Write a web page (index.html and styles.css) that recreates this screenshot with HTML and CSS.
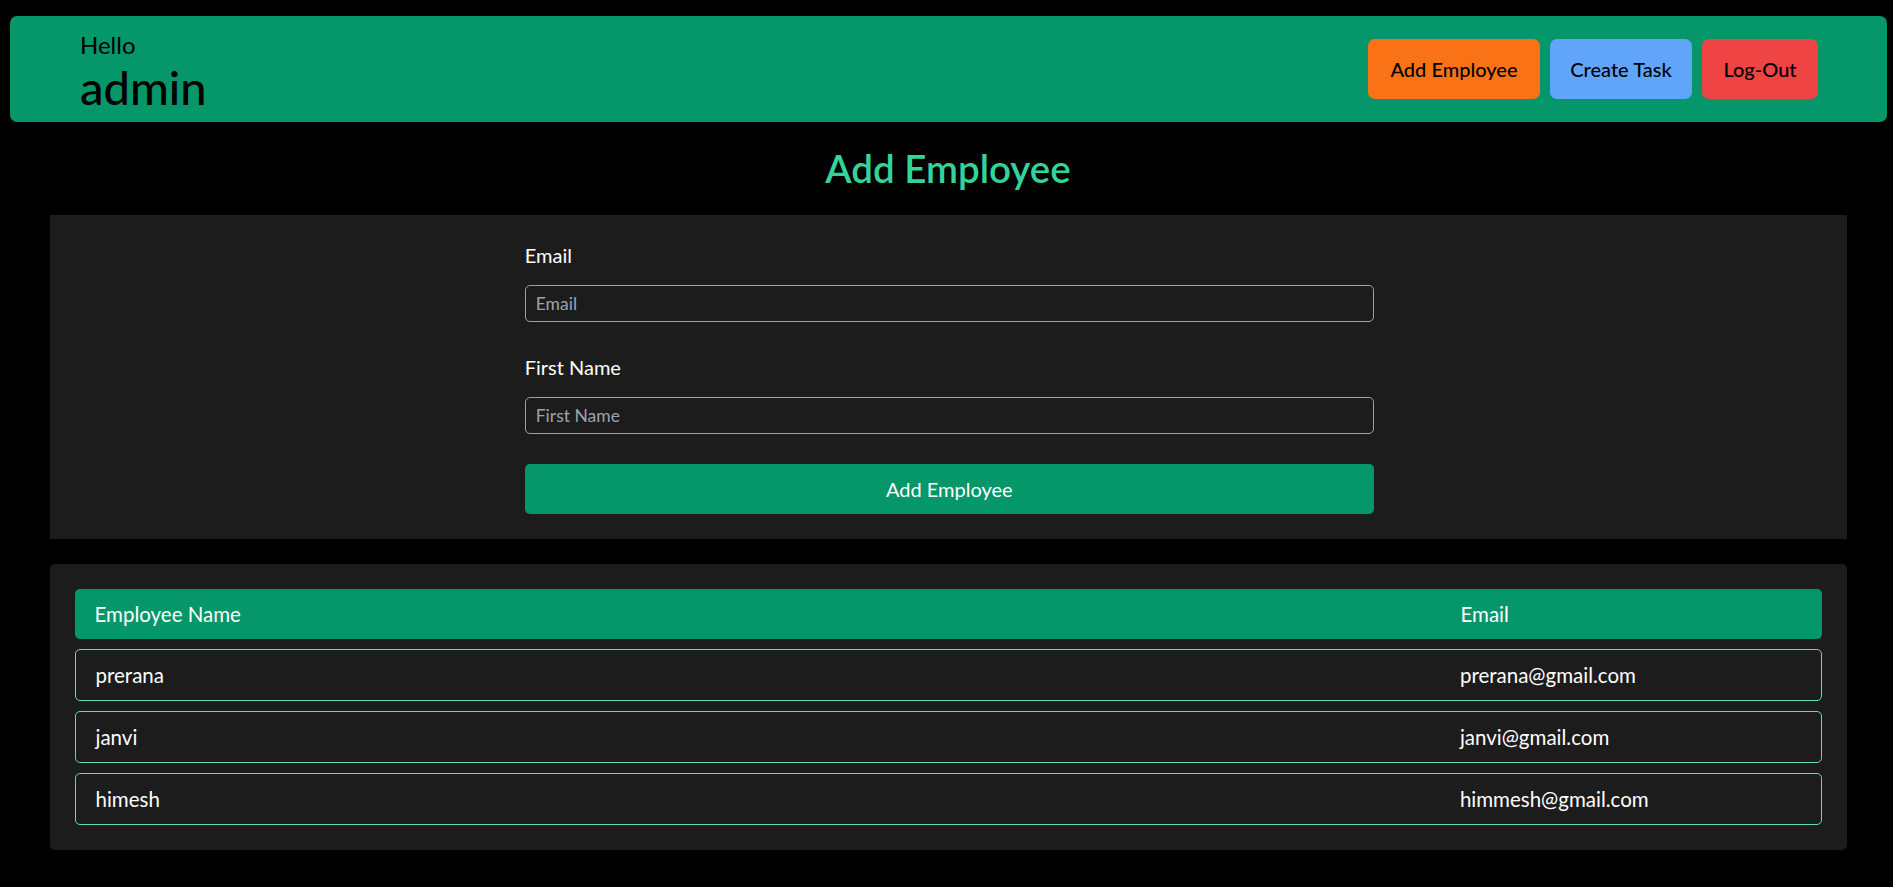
FILE: index.html
```html
<!DOCTYPE html>
<html lang="en">
<head>
<meta charset="utf-8">
<title>Admin Dashboard</title>
<link rel="stylesheet" href="styles.css">
</head>
<body>
<div class="page">
  <header class="topbar">
    <div class="greeting">
      <div class="hello">Hello</div>
      <div class="user">admin</div>
    </div>
    <nav class="actions">
      <button class="btn btn-orange">Add Employee</button>
      <button class="btn btn-blue">Create Task</button>
      <button class="btn btn-red">Log-Out</button>
    </nav>
  </header>

  <h1 class="title">Add Employee</h1>

  <section class="panel form-panel">
    <form class="emp-form">
      <label class="field-label">Email</label>
      <input class="field-input" type="email" placeholder="Email">
      <label class="field-label">First Name</label>
      <input class="field-input" type="text" placeholder="First Name">
      <button type="button" class="submit">Add Employee</button>
    </form>
  </section>

  <section class="panel table-panel">
    <div class="row head">
      <span>Employee Name</span>
      <span>Email</span>
    </div>
    <div class="row item">
      <span>prerana</span>
      <span>prerana@gmail.com</span>
    </div>
    <div class="row item">
      <span>janvi</span>
      <span>janvi@gmail.com</span>
    </div>
    <div class="row item">
      <span>himesh</span>
      <span>himmesh@gmail.com</span>
    </div>
  </section>
</div>
</body>
</html>
```
FILE: styles.css
```css
* { box-sizing: border-box; }
html, body {
  margin: 0;
  padding: 0;
  background: #000;
  font-family: Lato, "Noto Sans", sans-serif;
  color: #fff;
}
.page {
  padding: 16px 0 0 0;
}
.topbar {
  margin: 0 6px 0 10px;
  height: 106px;
  background: #059669;
  border-radius: 7px;
  padding: 10.5px 69px 10.5px 70px;
  display: flex;
  justify-content: space-between;
  align-items: center;
  color: #000;
}
.greeting { display: flex; flex-direction: column; }
.hello { font-size: 24px; line-height: 35px; }
.user { font-size: 47px; line-height: 50px; font-weight: 500; }
.actions { display: flex; gap: 10px; }
.btn {
  font-family: inherit;
  font-size: 20px;
  height: 60px;
  padding: 0;
  border: none;
  border-radius: 7px;
  color: #000;
  font-weight: 500;
  white-space: nowrap;
}
.btn-orange { background: #f97316; width: 172px; }
.btn-blue { background: #60a5fa; width: 142px; }
.btn-red { background: #ef4444; width: 116px; }

.title {
  margin: 24px 0;
  text-align: center;
  font-size: 38.5px;
  line-height: 45px;
  font-weight: 600;
  color: #34d399;
  padding-left: 3px;
}
.panel {
  margin: 0 46px 0 49.5px;
  background: #1c1c1c;
  padding: 25px;
}
.form-panel { border-radius: 0; }
.emp-form {
  width: 849px;
  margin: 0 auto;
  display: flex;
  flex-direction: column;
  position: relative;
  left: 1px;
}
.field-label {
  font-size: 20px;
  line-height: 30px;
  margin-bottom: 15px;
}
.field-input {
  height: 36.5px;
  background: transparent;
  border: 1px solid #9ca3af;
  border-radius: 5px;
  padding: 0 10px;
  font-family: inherit;
  font-size: 17.5px;
  color: #fff;
  margin-bottom: 30.5px;
}
.field-input::placeholder { color: #9ca3af; }
.submit {
  height: 50px;
  border: none;
  border-radius: 5px;
  background: #059669;
  color: #fff;
  font-family: inherit;
  font-size: 20px;
}
.table-panel {
  margin-top: 25px;
  border-radius: 5px;
  display: flex;
  flex-direction: column;
  gap: 10px;
}
.row {
  display: grid;
  grid-template-columns: 4fr 1fr;
  padding: 10px 20px;
  font-size: 20.5px;
  line-height: 30px;
  border-radius: 5px;
}
.head { background: #059669; }
.item { border: 1px solid #62dcae; }
```
